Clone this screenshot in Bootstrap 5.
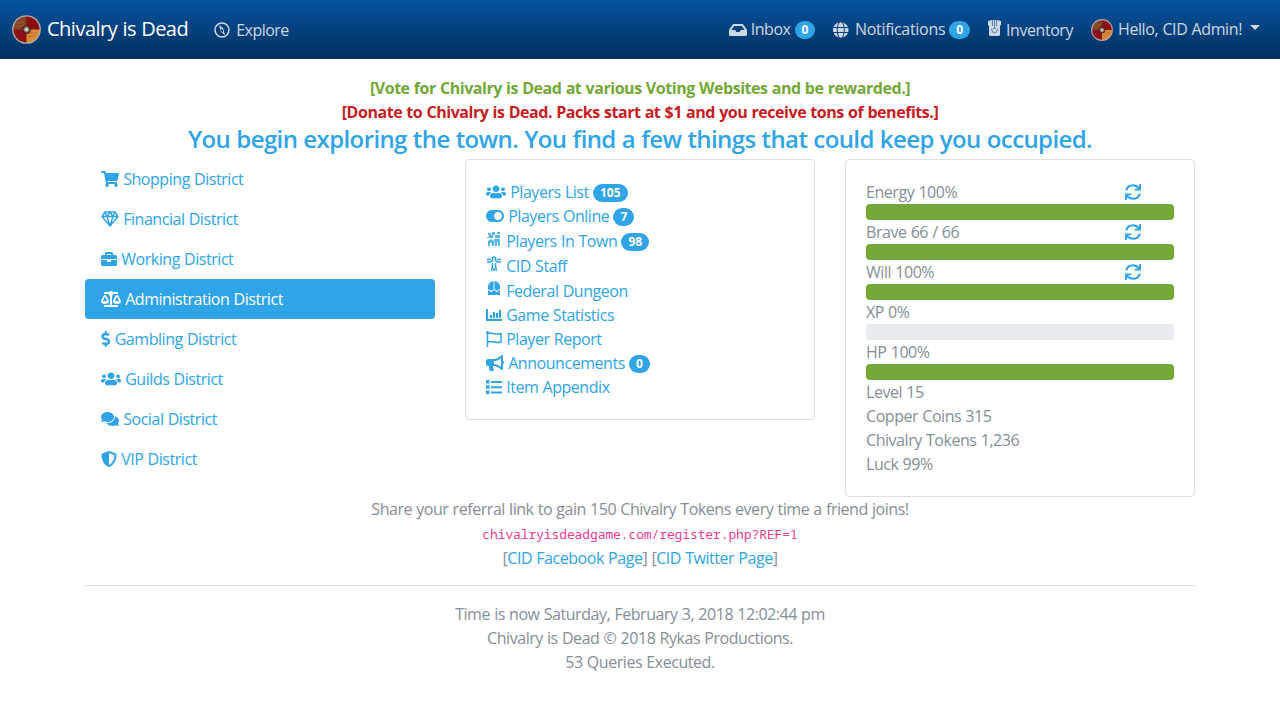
<!DOCTYPE html>
<html lang="en">
<head>
<meta charset="utf-8">
<meta name="viewport" content="width=device-width, initial-scale=1">
<title>Chivalry is Dead</title>
<link rel="stylesheet" href="https://cdn.jsdelivr.net/npm/bootstrap@5.3.0/dist/css/bootstrap.min.css">
<style>
body{font-family:"Open Sans","Noto Sans",sans-serif;font-size:16px;line-height:24px;color:#868e96;letter-spacing:-.45px;word-spacing:.45px;overflow-x:hidden}
a{color:#2fa4e7;text-decoration:none}
.topbar{height:59px;padding:0 16px 0 12px;background:linear-gradient(#0553a0,#022f5c)}
.topbar a{color:#cdd8e3}
.topbar .brand-link{color:#fff;font-size:20px;letter-spacing:-.5px;line-height:30px}
.brand-text{margin-left:2px;margin-top:-1px}
.explore{margin-left:26px;letter-spacing:-.55px}
.explore-label{margin-left:6px}
.entry{margin-left:18px}
.entry-label{margin:-1px 4px 0 4px}
.notes{margin-left:6px;letter-spacing:-.3px}
.inv-label{margin-left:5px}
.hello{margin:-1px 0 0 5px;font-weight:500;letter-spacing:-.4px}
.caret{margin:-4px 4px 0 8px}
.container{--bs-gutter-x:30px}
.row{--bs-gutter-x:30px}
.ico{height:16px;width:auto;fill:currentColor;display:inline-block;vertical-align:-2px;flex:none}
.badge{font-size:12px;line-height:12px;padding:3px 7px;background:#2fa4e7;letter-spacing:0;vertical-align:1px}
h4{font-size:24px;line-height:26.4px;font-weight:600;color:#2fa4e7;margin:2px 0 7px;letter-spacing:-.61px}
.vote-row{padding-top:17px}
.vote{color:#73a839}.donate{color:#c71c22}
.districts .nav-link{color:#2fa4e7;padding:8px 16px;height:40px}
.districts .nav-link.active{background:#2fa4e7;color:#fff;border-radius:4px}
.card{border-color:#dfdfdf;border-radius:4px;color:#868e96}
.card-body{padding:20px}
.links-body{height:259px}
.stats-body{height:336px}
.tall{height:25px;padding-top:1px}
.tall .ico{vertical-align:0}
.progress{height:16px;border-radius:4px;background:#e9ecef}
.progress-bar{background:#73a839}
.refresh{margin-right:33px}
code{font-family:"Noto Sans Mono","DejaVu Sans Mono","Liberation Mono",monospace;font-size:13px;color:#e83e8c;letter-spacing:-.11px}
hr{margin:15px 0 16px;border-top:1px solid #e2e2e2;opacity:1}
</style>
</head>
<body>
<svg width="0" height="0" class="position-absolute">
<symbol id="users" viewBox="0 0 640 512"><path transform="translate(0 22) scale(1 .9)" d="M96 224c35.3 0 64-28.7 64-64s-28.7-64-64-64-64 28.700-64 64 28.700 64 64 64zm448 0c35.300 0 64-28.700 64-64s-28.700-64-64-64-64 28.700-64 64 28.700 64 64 64zm32 32h-64c-17.600 0-33.500 7.100-45.100 18.600 40.300 22.100 68.900 62 75.100 109.400h66c17.700 0 32-14.300 32-32v-32c0-35.300-28.700-64-64-64zm-256 0c61.900 0 112-50.100 112-112S381.900 32 320 32 208 82.100 208 144s50.100 112 112 112zm76.800 32h-8.300c-20.800 10-43.900 16-68.500 16s-47.600-6-68.500-16h-8.300C179.600 288 128 339.600 128 403.200V432c0 26.500 21.500 48 48 48h288c26.500 0 48-21.500 48-48v-28.800c0-63.600-51.600-115.200-115.200-115.200zm-223.700-13.400C161.500 263.100 145.600 256 128 256H64c-35.300 0-64 28.700-64 64v32c0 17.700 14.300 32 32 32h65.900c6.300-47.400 34.900-87.300 75.200-109.400z"/></symbol>
<symbol id="refresh" viewBox="0 0 16 16"><path d="M1.200 6.600C2 3.200 4.800 1.200 8 1.200c2.400 0 4.300 1 5.800 2.900M14.800 9.400C14 12.800 11.200 14.800 8 14.800c-2.400 0-4.300-1-5.800-2.900" fill="none" stroke="currentColor" stroke-width="2.100"/><path d="M16 0v6.600H9.800V4.700h3.200L14.200 1.500V0zM0 16V9.400h6.200v1.900H3L1.800 14.500V16z"/></symbol>
<radialGradient id="hub"><stop offset="0" stop-color="#fff"/><stop offset=".35" stop-color="#a99a90"/><stop offset=".7" stop-color="#4a2018"/><stop offset="1" stop-color="#611" stop-opacity="0"/></radialGradient>
<symbol id="shield" viewBox="0 0 28 28"><circle cx="14" cy="14" r="13" fill="#8c1015"/><path d="M14 14V1a13 13 0 0 0-13 13z" fill="#7d4526"/><path d="M14 14V1a13 13 0 0 1 13 13z" fill="#8a0d10"/><path d="M14 14h13a13 13 0 0 1-13 13z" fill="#d98b38"/><path d="M16 18l8-1M16 21l7-1M4 8l8-1M3 11l9-1" stroke="#b9622c" stroke-width=".7"/><circle cx="14" cy="14" r="5" fill="url(#hub)"/><circle cx="14" cy="14" r="13.200" fill="none" stroke="#b7aaa5" stroke-width="1.300"/></symbol>
</svg>

<nav class="topbar d-flex align-items-center">
  <a class="brand-link d-flex align-items-center" href="#"><svg class="me-1 flex-shrink-0" width="29" height="29"><use href="#shield"/></svg><span class="brand-text">Chivalry is Dead</span></a>
  <a class="explore d-flex align-items-center" href="#"><svg class="ico" viewBox="0 0 16 16"><circle cx="8" cy="8" r="7" fill="none" stroke="currentColor" stroke-width="1.500"/><path d="M5 3l4 3 2 7-4-3zM7 6.500v2.500l2 1.500V8z" fill-rule="evenodd"/></svg><span class="explore-label">Explore</span></a>
  <div class="ms-auto d-flex align-items-center">
    <a class="d-flex align-items-center" href="#"><svg class="ico" viewBox="0 0 576 512"><path d="M567.938 243.908L462.250 85.374A48.003 48.003 0 0 0 422.311 64H153.689a48 48 0 0 0-39.938 21.374L8.062 243.908A47.994 47.994 0 0 0 0 270.533V400c0 26.510 21.490 48 48 48h480c26.510 0 48-21.490 48-48V270.533a47.994 47.994 0 0 0-8.062-26.625zM162.252 128h251.497l85.333 128H376l-32 64H232l-32-64H76.918l85.334-128z"/></svg><span class="entry-label">Inbox</span><span class="badge rounded-pill">0</span></a>
    <a class="entry d-flex align-items-center" href="#"><svg class="ico" viewBox="0 0 496 512"><path d="M336.500 160C322 70.700 287.800 8 248 8s-74 62.700-88.500 152h177zM152 256c0 22.200 1.200 43.500 3.300 64h185.300c2.100-20.500 3.300-41.800 3.300-64s-1.200-43.500-3.300-64H155.300c-2.100 20.500-3.300 41.800-3.300 64zm324.700-96c-28.600-67.900-86.500-120.400-158-141.600 24.400 33.800 41.200 84.700 50 141.600h108zM177.200 18.400C105.800 39.600 47.800 92.100 19.300 160h108c8.700-56.900 25.500-107.800 49.900-141.600zM487.400 192H372.700c2.100 21 3.300 42.500 3.300 64s-1.200 43-3.300 64h114.600c5.500-20.500 8.600-41.800 8.600-64s-3.100-43.500-8.500-64zM120 256c0-21.500 1.200-43 3.300-64H8.600C3.200 212.500 0 233.800 0 256s3.200 43.500 8.600 64h114.600c-2-21-3.200-42.500-3.200-64zm39.500 96c14.500 89.300 48.700 152 88.500 152s74-62.700 88.500-152h-177zm159.300 141.600c71.400-21.200 129.400-73.700 158-141.600h-108c-8.800 56.900-25.600 107.800-50 141.600zM19.300 352c28.600 67.900 86.500 120.400 158 141.600-24.400-33.800-41.200-84.700-50-141.600h-108z"/></svg><span class="entry-label notes">Notifications</span><span class="badge rounded-pill">0</span></a>
    <a class="entry d-flex align-items-center" href="#"><svg class="ico mb-1" viewBox="0 0 13 16"><path d="M0 1l4-1h5l4 1v4l-1 1v9l-1 1H2l-1-1V6L0 5z"/><path d="M4.500 0v6M8.500 0v6M6.500 0v8M3.500 9l1 3 2 1 2-1 1-3M5 8.500h3" fill="none" stroke="#4b78b5" stroke-width=".9"/></svg><span class="inv-label">Inventory</span></a>
    <a class="entry d-flex align-items-center" href="#"><svg width="22" height="22"><use href="#shield"/></svg><span class="hello">Hello, CID Admin!</span><svg class="caret" width="10" height="5" viewBox="0 0 10 5"><path d="M0 0h10L5 5z" fill="#cdd8e3"/></svg></a>
  </div>
</nav>

<main class="container text-center">
  <div class="vote-row"><a class="vote fw-bold" href="#">[Vote for Chivalry is Dead at various Voting Websites and be rewarded.]</a></div>
  <div><a class="donate fw-bold" href="#">[Donate to Chivalry is Dead. Packs start at $1 and you receive tons of benefits.]</a></div>
  <h4>You begin exploring the town. You find a few things that could keep you occupied.</h4>
  <div class="row text-start align-items-start">
    <div class="col-4">
      <nav class="nav flex-column districts">
        <a class="nav-link" href="#"><svg class="ico" viewBox="0 0 576 512"><path d="M528.120 301.319l47.273-208C578.806 78.301 567.391 64 551.990 64H159.208l-9.166-44.810C147.758 8.021 137.930 0 126.529 0H24C10.745 0 0 10.745 0 24v16c0 13.255 10.745 24 24 24h69.883l70.248 343.435C147.325 417.100 136 435.222 136 456c0 30.928 25.072 56 56 56s56-25.072 56-56c0-15.674-6.447-29.835-16.824-40h209.647C430.447 426.165 424 440.326 424 456c0 30.928 25.072 56 56 56s56-25.072 56-56c0-22.172-12.888-41.332-31.579-50.405l5.517-24.276c3.413-15.018-8.002-29.319-23.403-29.319H218.117l-6.545-32h293.145c11.206 0 20.920-7.754 23.403-18.681z"/></svg> Shopping District</a>
        <a class="nav-link" href="#"><svg class="ico" viewBox="0 0 18 16"><path d="M4 1h10l3 4.500L9 15 1 5.500zM1 5.500h16M4 1l2 4.500L9 15l3-9.500L14 1M6 5.500L9 1l3 4.500" fill="none" stroke="currentColor" stroke-width="1.400" stroke-linejoin="round"/></svg> Financial District</a>
        <a class="nav-link" href="#"><svg class="ico" viewBox="0 0 512 512"><path d="M320 336c0 8.840-7.160 16-16 16h-96c-8.840 0-16-7.160-16-16v-48H0v144c0 25.600 22.400 48 48 48h416c25.600 0 48-22.400 48-48V288H320v48zm144-208h-80V80c0-25.600-22.400-48-48-48H176c-25.600 0-48 22.400-48 48v48H48c-25.600 0-48 22.400-48 48v80h512v-80c0-25.600-22.400-48-48-48zm-144 0H192V96h128v32z"/></svg> Working District</a>
        <a class="nav-link active" href="#"><svg class="ico" viewBox="0 0 640 512"><path d="M256 336h-.020c0-16.180 1.340-8.730-85.050-181.510-17.650-35.290-68.190-35.360-85.870 0C-2.060 328.750.020 320.330.020 336H0c0 44.180 57.310 80 128 80s128-35.820 128-80zM128 176l72 144H56l72-144zm511.980 160c0-16.180 1.340-8.730-85.050-181.510-17.650-35.290-68.190-35.360-85.870 0-87.120 174.260-85.040 165.840-85.040 181.510H384c0 44.180 57.310 80 128 80s128-35.820 128-80h-.020zM440 320l72-144 72 144H440zm88 128H352V153.250c23.510-10.290 41.160-31.480 46.390-57.250H528c8.840 0 16-7.160 16-16V48c0-8.840-7.160-16-16-16H383.640C369.040 12.680 346.090 0 320 0s-49.040 12.680-63.640 32H112c-8.840 0-16 7.160-16 16v32c0 8.840 7.160 16 16 16h129.610c5.230 25.760 22.870 46.960 46.390 57.250V448H112c-8.840 0-16 7.160-16 16v32c0 8.840 7.160 16 16 16h416c8.840 0 16-7.160 16-16v-32c0-8.840-7.160-16-16-16z"/></svg> Administration District</a>
        <a class="nav-link" href="#"><svg class="ico" viewBox="-8 0 304 512"><path d="M209.200 233.400l-108-31.600C88.700 198.200 80 186.500 80 173.500c0-16.300 13.200-29.500 29.500-29.500h66.300c12.200 0 24.200 3.700 34.200 10.500 6.100 4.100 14.300 3.100 19.500-2l34.800-34c7.100-6.900 6.100-18.400-1.800-24.500C238 74.800 207.400 64.100 176 64V16c0-8.800-7.200-16-16-16h-32c-8.800 0-16 7.200-16 16v48h-2.500C45.800 64-5.400 118.700.5 183.600c4.200 46.100 39.400 83.600 83.800 96.600l102.500 30c12.500 3.700 21.200 15.300 21.200 28.300 0 16.300-13.200 29.500-29.500 29.500h-66.300C100 368 88 364.300 78 357.500c-6.100-4.100-14.300-3.100-19.500 2l-34.800 34c-7.100 6.900-6.100 18.400 1.800 24.500 24.500 19.200 55.100 29.900 86.500 30v48c0 8.800 7.200 16 16 16h32c8.800 0 16-7.200 16-16v-48.200c46.600-.9 90.300-28.600 105.700-72.700 21.500-61.600-14.600-124.800-72.500-141.700z"/></svg> Gambling District</a>
        <a class="nav-link" href="#"><svg class="ico" viewBox="0 0 640 512"><use href="#users"/></svg> Guilds District</a>
        <a class="nav-link" href="#"><svg class="ico" viewBox="0 0 576 512"><path d="M416 192c0-88.400-93.100-160-208-160S0 103.600 0 192c0 34.300 14.100 65.900 38 92-13.400 30.200-35.500 54.200-35.800 54.500-2.200 2.300-2.800 5.700-1.500 8.700S4.800 352 8 352c36.600 0 66.900-12.300 88.700-25 32.200 15.700 70.300 25 111.300 25 114.900 0 208-71.600 208-160zm122 220c23.900-26 38-57.700 38-92 0-66.900-53.500-124.200-129.300-148.100.9 6.600 1.300 13.300 1.300 20.100 0 105.900-107.700 192-240 192-10.800 0-21.300-.8-31.700-1.900C207.800 439.600 281.800 480 368 480c41 0 79.100-9.200 111.300-25 21.800 12.700 52.100 25 88.700 25 3.200 0 6.100-1.900 7.300-4.800 1.300-2.900.7-6.300-1.500-8.700-.3-.3-22.400-24.200-35.800-54.500z"/></svg> Social District</a>
        <a class="nav-link" href="#"><svg class="ico" viewBox="0 0 512 512"><path d="M466.500 83.700l-192-80a48.150 48.150 0 0 0-36.900 0l-192 80C27.700 91.100 16 108.600 16 128c0 198.500 114.500 335.700 221.500 380.300 11.800 4.900 25.100 4.900 36.900 0C360.100 472.600 496 349.300 496 128c0-19.400-11.700-36.900-29.500-44.300zM256.100 446.300l-.1-381 175.900 73.300c-3.300 151.400-82.100 261.100-175.800 307.700z"/></svg> VIP District</a>
      </nav>
    </div>
    <div class="col-4">
      <div class="card"><div class="card-body links-body">
        <div><a href="#"><svg class="ico" viewBox="0 0 640 512"><use href="#users"/></svg> Players List <span class="badge rounded-pill">105</span></a></div>
        <div><a href="#"><svg class="ico" viewBox="0 0 576 512"><path d="M384 64H192C86 64 0 150 0 256s86 192 192 192h192c106 0 192-86 192-192S490 64 384 64zm0 320c-70.800 0-128-57.300-128-128 0-70.800 57.300-128 128-128 70.800 0 128 57.300 128 128 0 70.800-57.300 128-128 128z"/></svg> Players Online <span class="badge rounded-pill">7</span></a></div>
        <div class="tall"><a href="#"><svg class="ico" viewBox="0 0 16 16"><path d="M2 2h3v2H2zM6 1h3v3H6zM11 1h3v2h-3zM3 4h4v3H3zM9 4h5v3H9zM1 6h3v1H1zM2 10l3-2 3 2v5H6v-3H4v3H2zM8 8h6v7h-2v-4h-1v4H9z" opacity=".8"/></svg> Players In Town <span class="badge rounded-pill">98</span></a></div>
        <div class="tall"><a href="#"><svg class="ico" viewBox="0 0 16 16"><path d="M6.500 1v3.500L4.500 6H1M1 3.500h4M9.500 1v3.500l2 1.500H15M11 3.500h4M6.500 7v3L5.500 15M9.500 7v3l1 5M8 0v2M8 12v3" fill="none" stroke="currentColor" stroke-width="1.500"/></svg> CID Staff</a></div>
        <div class="tall"><a href="#"><svg class="ico" viewBox="0 0 16 16"><path d="M2 14V6a6 6 0 0 1 12 0v8z"/><path d="M8 0v8M2 9h2v1.500h2V9h4v1.500h2V9h2" fill="none" stroke="#fff" stroke-width=".9"/></svg> Federal Dungeon</a></div>
        <div><a href="#"><svg class="ico" viewBox="0 0 16 16"><path d="M0 2h2v10h14v2H0zM4 8h2v3H4zM7 5h2v6H7zM10 6h2v5h-2zM13 3h2v8h-2z"/></svg> Game Statistics</a></div>
        <div><a href="#"><svg class="ico" viewBox="0 0 16 16"><path d="M1.500 1v15M1.500 2.500c4-2 7 2 13.500 0v8.500c-6 2-8-2-13.500 0" fill="none" stroke="currentColor" stroke-width="1.500"/><circle cx="1.500" cy="1.500" r="1.500"/></svg> Player Report</a></div>
        <div><a href="#"><svg class="ico" viewBox="0 0 576 512"><path d="M576 240c0-23.630-12.950-44.040-32-55.120V32.010C544 23.260 537.020 0 512 0c-7.120 0-14.190 2.380-19.980 7.020l-85.030 68.030C364.280 109.190 310.660 128 256 128H64c-35.350 0-64 28.650-64 64v96c0 35.350 28.650 64 64 64h33.700c-1.390 10.480-2.180 21.140-2.180 32 0 39.770 9.260 77.350 25.560 110.940 5.190 10.690 16.520 17.060 28.400 17.060h74.280c26.050 0 41.690-29.840 25.900-50.560-16.400-21.520-26.150-48.360-26.150-77.440 0-11.110 1.620-21.790 4.410-32H256c54.660 0 108.280 18.810 150.980 52.950l85.030 68.030a32.023 32.023 0 0 0 19.980 7.020c24.920 0 32-22.780 32-32V295.130C563.050 284.040 576 263.630 576 240zm-96 141.420l-33.050-26.440C392.950 311.780 325.120 288 256 288v-96c69.120 0 136.950-23.780 190.950-66.980L480 98.580v282.840z"/></svg> Announcements <span class="badge rounded-pill">0</span></a></div>
        <div><a href="#"><svg class="ico" viewBox="0 0 16 16"><path d="M0 1h3.500v3.500H0zM0 6.300h3.500v3.500H0zM0 11.600h3.500v3.500H0zM5 2h11v2H5zM5 7.200h11v2H5zM5 12.400h11v2H5z"/></svg> Item Appendix</a></div>
      </div></div>
    </div>
    <div class="col-4">
      <div class="card"><div class="card-body stats-body">
        <div class="d-flex justify-content-between align-items-center"><span>Energy 100%</span><a class="refresh lh-1" href="#"><svg class="ico" viewBox="0 0 16 16"><use href="#refresh"/></svg></a></div>
        <div class="progress"><div class="progress-bar" style="width:100%"></div></div>
        <div class="d-flex justify-content-between align-items-center"><span>Brave 66 / 66</span><a class="refresh lh-1" href="#"><svg class="ico" viewBox="0 0 16 16"><use href="#refresh"/></svg></a></div>
        <div class="progress"><div class="progress-bar" style="width:100%"></div></div>
        <div class="d-flex justify-content-between align-items-center"><span>Will 100%</span><a class="refresh lh-1" href="#"><svg class="ico" viewBox="0 0 16 16"><use href="#refresh"/></svg></a></div>
        <div class="progress"><div class="progress-bar" style="width:100%"></div></div>
        <div>XP 0%</div>
        <div class="progress"><div class="progress-bar" style="width:0%"></div></div>
        <div>HP 100%</div>
        <div class="progress"><div class="progress-bar" style="width:100%"></div></div>
        <div>Level 15</div><div>Copper Coins 315</div><div>Chivalry Tokens 1,236</div><div>Luck 99%</div>
      </div></div>
    </div>
  </div>
  <div>Share your referral link to gain 150 Chivalry Tokens every time a friend joins!</div>
  <div><code>chivalryisdeadgame.com/register.php?REF=1</code></div>
  <div>[<a href="#">CID Facebook Page</a>] [<a href="#">CID Twitter Page</a>]</div>
  <hr>
  <footer><div>Time is now Saturday, February 3, 2018 12:02:44 pm</div><div>Chivalry is Dead © 2018 Rykas Productions.</div><div>53 Queries Executed.</div></footer>
</main>
<script src="https://cdn.jsdelivr.net/npm/bootstrap@5.3.0/dist/js/bootstrap.bundle.min.js"></script>
</body>
</html>
